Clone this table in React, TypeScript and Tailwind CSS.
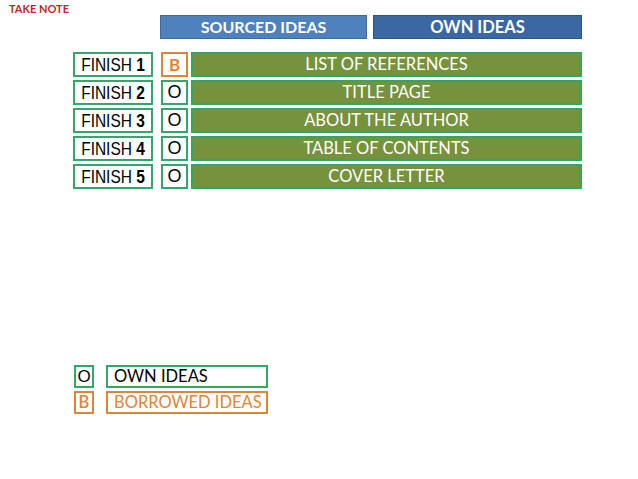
import React from "react";

type Row = { n: number; mark: "B" | "O"; label: string };

const rows: Row[] = [
  { n: 1, mark: "B", label: "LIST OF REFERENCES" },
  { n: 2, mark: "O", label: "TITLE PAGE" },
  { n: 3, mark: "O", label: "ABOUT THE AUTHOR" },
  { n: 4, mark: "O", label: "TABLE OF CONTENTS" },
  { n: 5, mark: "O", label: "COVER LETTER" },
];

const calibri = { fontFamily: "Lato, 'Open Sans', sans-serif" };
const arial = { fontFamily: "'Liberation Sans', Arial, sans-serif" };

const FinishRow = ({ row }: { row: Row }) => {
  const isB = row.mark === "B";
  return (
    <div className="flex h-[25px] items-stretch">
      <div
        className="flex w-[80px] items-center justify-center overflow-hidden border-2 border-[#34a56c] text-[18px] leading-none text-black"
        style={arial}
      >
        <span className="inline-block scale-x-[0.86] whitespace-nowrap">
          FINISH <span className="font-bold">{row.n}</span>
        </span>
      </div>
      <div
        className={
          isB
            ? "ml-[8px] flex w-[27px] items-center justify-center border-2 border-[#e0843a] text-[17px] font-bold text-[#e0843a]"
            : "ml-[8px] flex w-[27px] items-center justify-center border-2 border-[#34a56c] text-[18px] text-black"
        }
        style={isB ? calibri : arial}
      >
        {row.mark}
      </div>
      <div
        className="ml-[3px] flex w-[391px] items-center justify-center border-2 border-[#2fa85f] bg-[#76923c] text-[16.5px] text-white"
        style={calibri}
      >
        {row.label}
      </div>
    </div>
  );
};

export default function App() {
  return (
    <div className="h-[479px] w-[638px] overflow-hidden bg-white" style={calibri}>
      <div className="pl-[9px] pt-[3px] text-[11px] font-bold leading-[11px] text-[#c0262b]">TAKE NOTE</div>

      <div className="mt-[1px] flex gap-[6px] pl-[160px]">
        <div className="flex h-[24px] w-[207px] items-center justify-center border border-[#3d6a9f] bg-[#4f81bd] text-[16px] font-bold text-white">
          SOURCED IDEAS
        </div>
        <div className="flex h-[24px] w-[209px] items-center justify-center border border-[#2f5486] bg-[#3b67a2] text-[16.5px] font-bold text-white">
          OWN IDEAS
        </div>
      </div>

      <div className="mt-[13px] flex flex-col gap-[3px] pl-[73px]">
        {rows.map((r) => (
          <FinishRow key={r.n} row={r} />
        ))}
      </div>

      <div className="mt-[176px] flex flex-col gap-[3px] pl-[74px]">
        <div className="flex h-[23px]">
          <div
            className="flex w-[20px] items-center justify-center border-2 border-[#34a56c] text-[17px] text-black"
            style={arial}
          >
            O
          </div>
          <div className="ml-[12px] flex w-[162px] items-center border-2 border-[#34a56c] pl-[6px] text-[16.5px] text-black">
            OWN IDEAS
          </div>
        </div>
        <div className="flex h-[23px]">
          <div className="flex w-[20px] items-center justify-center border-2 border-[#e0843a] text-[16.5px] font-semibold text-[#e0843a]">
            B
          </div>
          <div className="ml-[12px] flex w-[162px] items-center border-2 border-[#e0843a] pl-[6px] text-[16.5px] text-[#e0843a]">
            BORROWED IDEAS
          </div>
        </div>
      </div>
    </div>
  );
}
